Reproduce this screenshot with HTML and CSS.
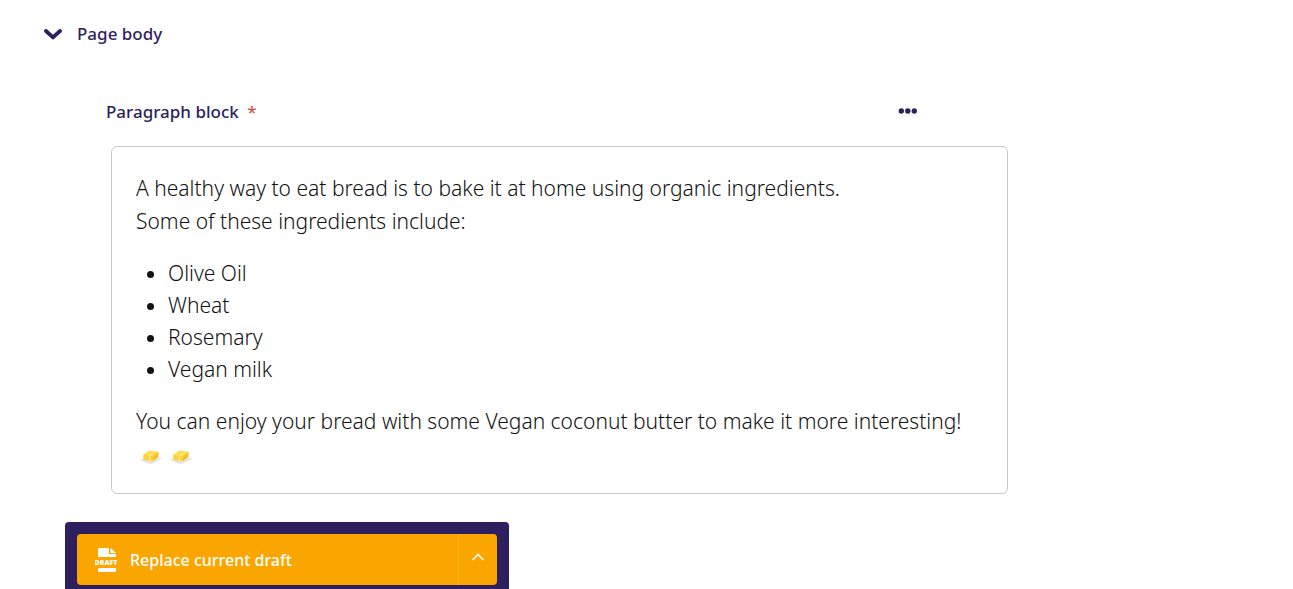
FILE: index.html
```html
<!DOCTYPE html>
<html lang="en">
<head>
<meta charset="utf-8">
<meta name="viewport" content="width=device-width, initial-scale=1">
<title>Page body</title>
<link rel="stylesheet" href="styles.css">
</head>
<body>
<svg class="symbols" aria-hidden="true">
  <symbol id="butter" viewBox="0 0 22 16">
    <path d="M0 10.800 7.600 7 22 9.200 12.500 14.600 10 14.800Z" fill="#d9d9de"/>
    <path d="M1.600 10.400 8 7 20.600 9 12 13.500Z" fill="#f5f5f6"/>
    <path d="M3.200 5.800 9.500 1.500 18.600 2.700 13.200 6.900Z" fill="#ffdd45"/>
    <path d="M3.200 5.800 13.200 6.900 12.800 12.500 3.400 10.900Z" fill="#fdd23c"/>
    <path d="M13.200 6.900 18.600 2.700 18.300 8.300 12.800 12.500Z" fill="#f5bd27"/>
    <path d="M9.500 6.500 15.400 2.400M9.500 6.500V11.800" fill="none" stroke="#ffef9a" stroke-width="1"/>
  </symbol>
</svg>
<main class="page">
  <section class="panel">
    <header class="panel-header">
      <button class="toggle" type="button" aria-label="Toggle section" aria-expanded="true">
        <svg width="18" height="11" viewBox="0 0 18 11"><path d="M2 2 9 8.4 16 2" fill="none" stroke="#2e1f5e" stroke-width="3.8" stroke-linecap="round" stroke-linejoin="round"/></svg>
      </button>
      <h2 class="heading">Page body</h2>
    </header>
    <div class="block">
      <div class="block-header">
        <h3 class="heading">Paragraph block <span class="required">*</span></h3>
        <button class="more" type="button" aria-label="Actions">
          <svg width="20" height="6" viewBox="0 0 20 6" fill="#2e1f5e"><circle cx="3.3" cy="3" r="2.7"/><circle cx="9.8" cy="3" r="2.7"/><circle cx="16.3" cy="3" r="2.7"/></svg>
        </button>
      </div>
      <div class="editor">
        <p>A healthy way to eat bread is to bake it at home using organic ingredients.<br>Some of these ingredients include:</p>
        <ul>
          <li>Olive Oil</li>
          <li>Wheat</li>
          <li>Rosemary</li>
          <li>Vegan milk</li>
        </ul>
        <p>You can enjoy your bread with some Vegan coconut butter to make it more interesting!</p>
        <div class="butters">
          <svg width="22" height="16" role="img" aria-label="Butter"><use href="#butter"/></svg>
          <svg width="22" height="16" role="img" aria-label="Butter"><use href="#butter"/></svg>
        </div>
      </div>
    </div>
  </section>
  <footer class="actions">
    <button class="save" type="button">
      <svg width="24" height="24" viewBox="0 0 24 24" fill="#fff">
        <path d="M3 9V1.5Q3 0 4.500 0H14V6H21V9Z"/>
        <path d="M15.500 0 21 5H15.500Z"/>
        <path d="M3 20H21V22.500Q21 24 19.500 24H4.500Q3 24 3 22.500Z"/>
        <text class="draft" x="11" y="17" text-anchor="middle">DRAFT</text>
      </svg>
      <span>Replace current draft</span>
    </button>
    <button class="save-more" type="button" aria-label="More actions">
      <svg width="14" height="8" viewBox="0 0 14 8"><path d="M1.500 7 7 1.500 12.500 7" fill="none" stroke="#fff" stroke-width="1.6"/></svg>
    </button>
  </footer>
</main>
</body>
</html>
```
FILE: styles.css
```css
* {
  box-sizing: border-box;
}

body {
  margin: 0;
  background: #fff;
  color: #262626;
  font-family: "Noto Sans", "Open Sans", sans-serif;
}

button {
  padding: 0;
  border: 0;
  background: none;
  font: inherit;
  cursor: pointer;
}

svg {
  display: block;
}

.symbols {
  position: absolute;
  width: 0;
  height: 0;
}

.page {
  max-width: 1008px;
  padding-top: 22px;
}

.panel-header {
  display: flex;
  align-items: center;
  gap: 15px;
  padding-left: 44px;
}

.heading {
  margin: 0;
  color: #2e1f5e;
  font-size: 17px;
  font-weight: 500;
  line-height: 24px;
}

.required {
  margin-left: 4px;
  color: #cd4444;
  font-weight: 400;
}

.block {
  padding: 54px 0 0 106px;
}

.block-header {
  display: flex;
  align-items: center;
  justify-content: space-between;
  padding-right: 90px;
}

.more {
  padding-bottom: 2px;
}

.editor {
  margin: 22px 0 0 5px;
  padding: 25px 16px 28px 24px;
  border: 1px solid #c8c8c8;
  border-radius: 6px;
  color: #111;
  font-size: 21px;
  font-weight: 300;
  line-height: 33px;
}

.editor p {
  margin: 0;
}

.editor ul {
  margin: 19px 0 20px;
  padding-left: 32px;
  line-height: 32px;
}

.butters {
  display: flex;
  gap: 8px;
  padding: 11px 0 0 4px;
}

.actions {
  display: flex;
  width: 444px;
  max-width: 100%;
  margin: 28px 0 0 65px;
  padding: 12px 12px 4px;
  border-radius: 4px 4px 0 0;
  background: #2e1f5e;
}

.save {
  display: flex;
  flex: 1;
  align-items: center;
  gap: 11px;
  height: 51px;
  padding-left: 18px;
  border-radius: 4px 0 0 4px;
  background: #faa500;
  color: #fff;
  font-size: 16px;
  font-weight: 500;
}

.save-more {
  display: grid;
  place-items: center;
  width: 39px;
  padding-bottom: 5px;
  border-left: 1px solid #fbb733;
  border-radius: 0 4px 4px 0;
  background: #faa500;
}

.draft {
  font-family: "Open Sans", sans-serif;
  font-size: 7px;
  font-weight: 800;
}
```
